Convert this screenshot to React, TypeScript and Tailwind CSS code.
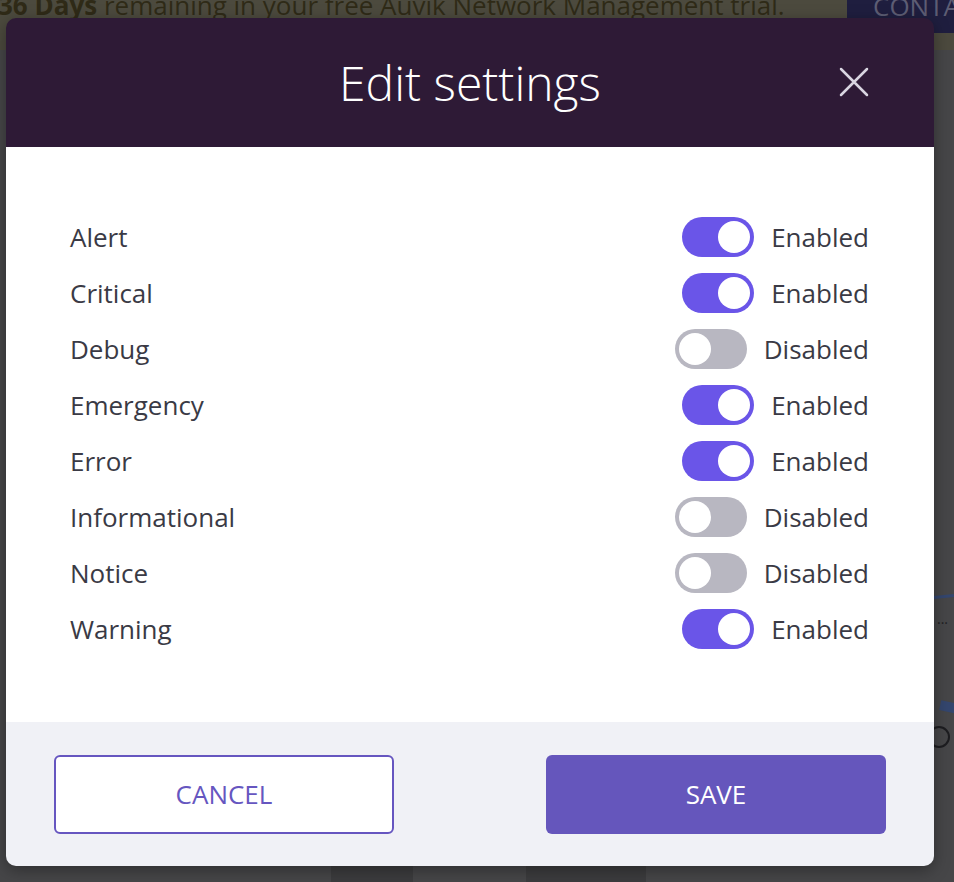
import React, { useState } from 'react';

type Level = { name: string; enabled: boolean };

const initialLevels: Level[] = [
  { name: 'Alert', enabled: true },
  { name: 'Critical', enabled: true },
  { name: 'Debug', enabled: false },
  { name: 'Emergency', enabled: true },
  { name: 'Error', enabled: true },
  { name: 'Informational', enabled: false },
  { name: 'Notice', enabled: false },
  { name: 'Warning', enabled: true },
];

const Toggle = ({ on, onClick }: { on: boolean; onClick: () => void }) => (
  <button
    type="button"
    onClick={onClick}
    className={`flex w-[72px] h-[40px] rounded-full p-[4px] ${on ? 'bg-[#6a55e8] justify-end' : 'bg-[#b8b7c1] justify-start'}`}
  >
    <span className="block w-[32px] h-[32px] rounded-full bg-white" />
  </button>
);

const App = () => {
  const [levels, setLevels] = useState<Level[]>(initialLevels);

  const toggle = (name: string) =>
    setLevels(prev => prev.map(l => (l.name === name ? { ...l, enabled: !l.enabled } : l)));

  return (
    <div className="relative w-[954px] h-[882px] overflow-hidden bg-[#464648] font-['Open_Sans',sans-serif]">
      {/* dimmed page behind the dialog */}
      <div className="flex h-[50px] bg-[#4c4a3e]">
        <div className="flex-1 overflow-hidden">
          <p className="mt-[-8px] ml-[-2px] whitespace-nowrap text-[26px] leading-none text-[#2f2a17]">
            <span className="font-bold">36 Days</span> remaining in your free Auvik Network Management trial.
          </p>
        </div>
        <div className="w-[107px] h-[33px] bg-[#1f1e3f] overflow-hidden">
          <p className="mt-[-7px] ml-[26px] text-[26px] leading-none text-[#5d5d74] whitespace-nowrap">CONTACT</p>
        </div>
      </div>
      <div className="absolute right-0 top-[596px] w-[40px] h-[3px] bg-[#34466e] -rotate-6" />
      <div className="absolute right-[6px] top-[612px] text-[#1f1f22] text-[14px] leading-none">...</div>
      <div className="absolute right-[-4px] top-[702px] w-[18px] h-[10px] bg-[#34466e] rotate-12" />
      <div className="absolute right-[4px] top-[726px] w-[22px] h-[22px] rounded-full border-[2px] border-[#1d1d20]" />
      <div className="absolute left-[331px] top-[866px] w-[82px] h-[16px] bg-[#3c3c3e]" />
      <div className="absolute left-[526px] top-[866px] w-[120px] h-[16px] bg-[#3c3c3e]" />

      {/* dialog */}
      <div className="absolute left-[6px] top-[18px] w-[928px] rounded-[10px] overflow-hidden shadow-[0_4px_16px_rgba(0,0,0,0.35)]">
        <div className="relative h-[129px] bg-[#2e1a36] flex items-center justify-center">
          <h1 className="text-[48px] font-light text-white leading-none">Edit settings</h1>
          <button type="button" className="absolute right-[65px] top-[49px] w-[30px] h-[30px] text-[#d9d5e1]">
            <svg viewBox="0 0 30 30" className="w-full h-full" fill="none" stroke="currentColor" strokeWidth="2.5" strokeLinecap="round">
              <path d="M2 2 L28 28 M28 2 L2 28" />
            </svg>
          </button>
        </div>

        <div className="bg-white pl-16 pr-[65px] pt-[62px] pb-[65px]">
          {levels.map(l => (
            <div key={l.name} className="flex h-[56px] items-center justify-between">
              <span className="text-[26px] text-[#3a3a45]">{l.name}</span>
              <div className="flex items-center gap-[17px]">
                <Toggle on={l.enabled} onClick={() => toggle(l.name)} />
                <span className="text-[26px] text-[#3a3a45]">{l.enabled ? 'Enabled' : 'Disabled'}</span>
              </div>
            </div>
          ))}
        </div>

        <div className="flex justify-between bg-[#f0f1f6] px-12 pt-[33px] pb-[32px]">
          <button type="button" className="w-[340px] h-[79px] rounded-[6px] border-2 border-[#6656c0] bg-white text-[26px] text-[#6656c0]">
            CANCEL
          </button>
          <button type="button" className="w-[340px] h-[79px] rounded-[6px] bg-[#6556bc] text-[26px] text-white">
            SAVE
          </button>
        </div>
      </div>
    </div>
  );
};

export default App;
